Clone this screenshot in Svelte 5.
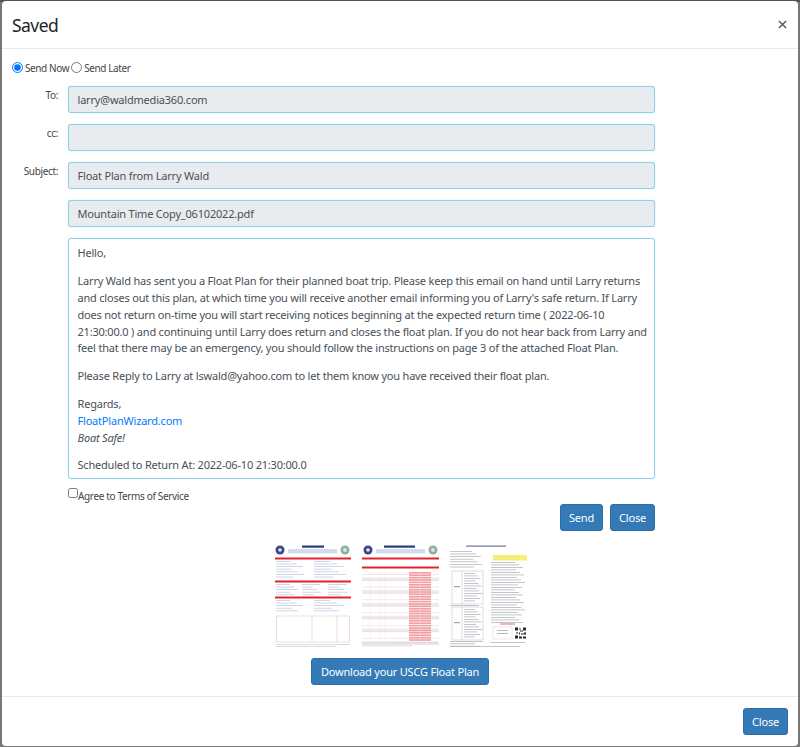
<script>
  const range = (a, b, s) => { const r = []; for (let v = a; v < b; v += s) r.push(v); return r; };
  const w = (i, min, max) => min + ((i * 37) % 11) / 10 * (max - min);
  const rows2 = range(571, 642, 6.4);
  const ruled = range(572, 640, 2.4);
  const leftText = [...range(551, 568, 2.6), ...range(605, 606, 2.6), ...range(641, 647, 2.4)];
  const rightText = range(562, 624, 2.5);
  const box = [571, 607];
  const boxLines = range(0, 30, 2.5);
  const qr = [[0,0,3,3],[8,0,3,3],[0,8,3,3],[4,1,2,1],[5,3,3,1],[4,5,1,2],[6,6,3,1],[9,5,2,2],[4,9,3,2],[8,9,3,2],[1,5,2,1]];
</script>

<div class="backdrop">
  <div class="modal">
    <header class="head">
      <h1>Saved</h1>
      <svg class="x" viewBox="0 0 10 10" width="9" height="9" aria-label="Close"><path d="M1 1 9 9M9 1 1 9" stroke="#555" stroke-width="1.5" fill="none"/></svg>
    </header>
    <section class="body">
      <div class="radios">
        <label><input type="radio" name="when" checked />Send Now</label>
        <label><input type="radio" name="when" />Send Later</label>
      </div>
      <div class="grid">
        <span class="lbl">To:</span>
        <div class="field">larry@waldmedia360.com</div>
        <span class="lbl">cc:</span>
        <div class="field"></div>
        <span class="lbl">Subject:</span>
        <div class="field">Float Plan from Larry Wald</div>
        <span></span>
        <div class="field">Mountain Time Copy_06102022.pdf</div>
        <span></span>
        <div class="message">
          <p>Hello,</p>
          <p>Larry Wald has sent you a Float Plan for their planned boat trip. Please keep this email on hand until Larry returns<br />and closes out this plan, at which time you will receive another email informing you of Larry's safe return. If Larry<br />does not return on-time you will start receiving notices beginning at the expected return time ( 2022-06-10<br />21:30:00.0 ) and continuing until Larry does return and closes the float plan. If you do not hear back from Larry and<br />feel that there may be an emergency, you should follow the instructions on page 3 of the attached Float Plan.</p>
          <p>Please Reply to Larry at lswald@yahoo.com to let them know you have received their float plan.</p>
          <p>Regards,<br /><a href="#top">FloatPlanWizard.com</a><br /><em>Boat Safe!</em></p>
          <p>Scheduled to Return At: 2022-06-10 21:30:00.0</p>
        </div>
        <span></span>
        <label class="agree"><input type="checkbox" />Agree to Terms of Service</label>
        <span></span>
        <div class="actions">
          <button class="send">Send</button>
          <button class="close">Close</button>
        </div>
      </div>

      <div class="thumbs">
        <svg class="thumb" viewBox="274 545 78 103" width="78" height="103">
          <rect x="274" y="545" width="78" height="103" fill="#fff"/>
          <circle cx="280" cy="550" r="4.500" fill="#3b4a86"/>
          <circle cx="280" cy="550" r="1.800" fill="#e6e8f2"/>
          <circle cx="345" cy="550" r="4.500" fill="#8fb0a2"/>
          <circle cx="345" cy="550" r="2" fill="#d8e4dc"/>
          <rect x="302" y="545.500" width="22" height="2.200" fill="#2c3a7c"/>
          <rect x="288" y="549" width="49" height="4.500" fill="#d3dbec"/>
          <rect x="275" y="557.500" width="76" height="2" fill="#e4222e"/>
          <rect x="275" y="580.500" width="76" height="2" fill="#e4222e"/>
          <rect x="275" y="596.500" width="76" height="2" fill="#e4222e"/>
          {#each range(561, 579, 2.6) as y, i}
            <rect x="276" y={y} width={w(i, 14, 30)} height=".8" fill="#c3cbe0"/>
            <rect x="314" y={y} width={w(i + 3, 14, 32)} height=".8" fill="#c3cbe0"/>
          {/each}
          {#each range(584, 595, 2.6) as y, i}
            <rect x="276" y={y} width={w(i, 14, 24)} height=".8" fill="#c3cbe0"/>
            <rect x="302" y={y} width={w(i + 2, 10, 20)} height=".8" fill="#c3cbe0"/>
            <rect x="328" y={y} width={w(i + 5, 10, 20)} height=".8" fill="#c3cbe0"/>
          {/each}
          {#each range(600, 613, 2.6) as y, i}
            <rect x="276" y={y} width={w(i, 14, 30)} height=".8" fill="#c3cbe0"/>
            <rect x="314" y={y} width={w(i + 3, 14, 32)} height=".8" fill="#c3cbe0"/>
          {/each}
          <rect x="276.500" y="616" width="73" height="26" fill="#fff" stroke="#e3c5ca" stroke-width=".6"/>
          <path d="M312 616v26M337 616v26" stroke="#e3c5ca" stroke-width=".6"/>
          <rect x="276" y="644" width="74" height=".8" fill="#c8d0e4"/>
          <rect x="276" y="646" width="60" height=".8" fill="#d0d3da"/>
        </svg>
        <svg class="thumb" viewBox="361 545 80 103" width="80" height="103">
          <rect x="361" y="545" width="80" height="103" fill="#fff"/>
          <circle cx="368" cy="550" r="4.500" fill="#3b4a86"/>
          <circle cx="368" cy="550" r="1.800" fill="#e6e8f2"/>
          <circle cx="433" cy="550" r="4.500" fill="#8fb0a2"/>
          <circle cx="433" cy="550" r="2" fill="#d8e4dc"/>
          <rect x="384" y="545.500" width="31" height="2.200" fill="#2c3a7c"/>
          <rect x="376" y="549" width="49" height="4.500" fill="#d3dbec"/>
          <rect x="362" y="557.500" width="77" height="2" fill="#e4222e"/>
          <rect x="362" y="566.500" width="77" height="2" fill="#e4222e"/>
          {#each rows2 as y, i}
            {#if i % 2}<rect x="362" y={y} width="77" height="3.200" fill="#f1e8ea"/>{/if}
            <rect x="362" y={y + 3} width="77" height=".5" fill="#ecd2d6"/>
          {/each}
          {#each ruled as y}
            <rect x="409" y={y} width="22" height="1.600" fill="#f29ca1"/>
          {/each}
          <path d="M420 570v71M370 570v71M380 570v71M385 570v71" stroke="#f1dde0" stroke-width=".5"/>
          <rect x="362" y="642.500" width="76" height=".8" fill="#c8d0e4"/>
          <rect x="362" y="645.500" width="50" height=".8" fill="#d0d3da"/>
        </svg>
        <svg class="thumb third" viewBox="448 545 79 103" width="79" height="103">
          <rect x="448" y="545" width="79" height="103" fill="#fff"/>
          <rect x="466" y="545.500" width="40" height="1.200" fill="#6a75a0"/>
          {#each leftText as y, i}
            <rect x="450" y={y} width={w(i, 22, 33)} height=".8" fill="#b4b7be"/>
          {/each}
          {#each box as y}
            <rect x="452" y={y} width="31" height="33" fill="none" stroke="#b8bbc0" stroke-width=".5"/>
            <path d="M462 {y}v33" stroke="#b8bbc0" stroke-width=".5"/>
            {#each boxLines as d, i}
              <rect x="464" y={y + d + 2} width={w(i, 11, 18)} height=".8" fill="#b4b7be"/>
            {/each}
            <rect x="454" y={y + 15} width="6" height="1.200" fill="#a0a3aa"/>
          {/each}
          {#each rightText as y, i}
            <rect x="491" y={y} width={w(i, 24, 34)} height=".8" fill="#b4b7be"/>
          {/each}
          <rect x="493" y="555" width="34" height="5.500" fill="#f3ef78"/>
          <rect x="500" y="623.500" width="15" height="1" fill="#ef6a70"/>
          <rect x="493" y="627" width="19" height="12" fill="none" stroke="#d0d2d6" stroke-width=".5"/>
          <rect x="497" y="630" width="11" height="1" fill="#b4b7be"/>
          <rect x="497" y="633" width="11" height="1" fill="#b4b7be"/>
          <rect x="515" y="627.500" width="11.500" height="11.500" fill="#fff"/>
          {#each qr as [x, y, ww, h]}
            <rect x={515 + x} y={627.500 + y} width={ww} height={h} fill="#2a2a2a"/>
          {/each}
          <rect x="490" y="642" width="35" height=".8" fill="#b4b7be"/>
          <rect x="450" y="646" width="70" height=".8" fill="#b4b7be"/>
        </svg>
      </div>
      <div class="download"><button>Download your USCG Float Plan</button></div>
    </section>
    <footer class="foot"><button>Close</button></footer>
  </div>
</div>

<style>
  :global(body) { margin: 0; background: #6f7377; }
  .backdrop { width: 800px; height: 747px; box-sizing: border-box; padding: 1px 2px; overflow: hidden;
    background: linear-gradient(#4a5560 0, #4a5560 2px, #777 2px); }
  .modal { height: 745px; box-sizing: border-box; background: #fff; border-radius: 4px; display: flex; flex-direction: column;
    font-family: "Noto Sans", "Open Sans", sans-serif; color: #495057; }
  .head { height: 47px; flex: none; border-bottom: 1px solid #e9ecef; display: flex; align-items: center; justify-content: space-between; padding: 0 11px 0 10px; }
  h1 { margin: 0; font-size: 17.500px; font-weight: 400; letter-spacing: -.55px; color: #212529; }
  .x { display: block; }
  .body { flex: 1; padding: 0 10px; }
  .radios { display: flex; height: 37px; align-items: center; font-size: 10px; letter-spacing: -.4px; color: #444; gap: 2px; }
  .radios label { display: flex; align-items: center; }
  .radios input { margin: 0 2px 1px 0; width: 11px; height: 11px; accent-color: #0075ff; }
  .grid { display: grid; grid-template-columns: 46px 587px; column-gap: 10px; row-gap: 11px; }
  .lbl { font-size: 10px; letter-spacing: -.35px; color: #444; text-align: right; padding-top: 2px; line-height: 14px; }
  .field { height: 27px; box-sizing: border-box; background: #e9ecef; border: 1px solid #8fd0ec; box-shadow: 0 0 1px #8fd0ec; border-radius: 3px; padding: 0 8.500px; font-size: 11px; letter-spacing: -.2px; line-height: 25px; }
  .message { height: 241px; box-sizing: border-box; border: 1px solid #8fd0ec; box-shadow: 0 0 1px #8fd0ec; border-radius: 3px; padding: 6px 8.500px 4px; font-size: 11px; letter-spacing: -.2px; line-height: 16.950px; white-space: nowrap; overflow: hidden; margin-bottom: -1px; }
  .message p { margin: 0 0 10.700px; }
  .message a { color: #007bff; text-decoration: none; }
  .agree { display: flex; align-items: flex-start; font-size: 10px; letter-spacing: -.35px; color: #444; line-height: 14px; height: 14px; }
  .agree input { margin: -1px 0 0 0; width: 10px; height: 10px; }
  .actions { display: flex; justify-content: flex-end; gap: 7px; margin-top: -10px; }
  button { height: 27px; box-sizing: border-box; background: #337ab7; border: 1px solid #2e6da4; border-radius: 3px; color: #fff; font: 11px "Noto Sans", "Open Sans", sans-serif; letter-spacing: -.2px; padding: 0; white-space: nowrap; }
  .send { width: 43px; }
  .close { width: 45px; }
  .thumbs { display: flex; margin: 14px 0 0 262px; gap: 9px; }
  .thumb { display: block; filter: blur(.45px); }
  .third { margin-left: -2px; }
  .download { display: flex; margin: 10px 0 0 299px; }
  .download button { width: 178px; }
  .foot { flex: none; height: 50px; box-sizing: border-box; border-top: 1px solid #e9ecef; display: flex; justify-content: flex-end; padding: 11px 10px 0 0; }
  .foot button { width: 45px; }
</style>
